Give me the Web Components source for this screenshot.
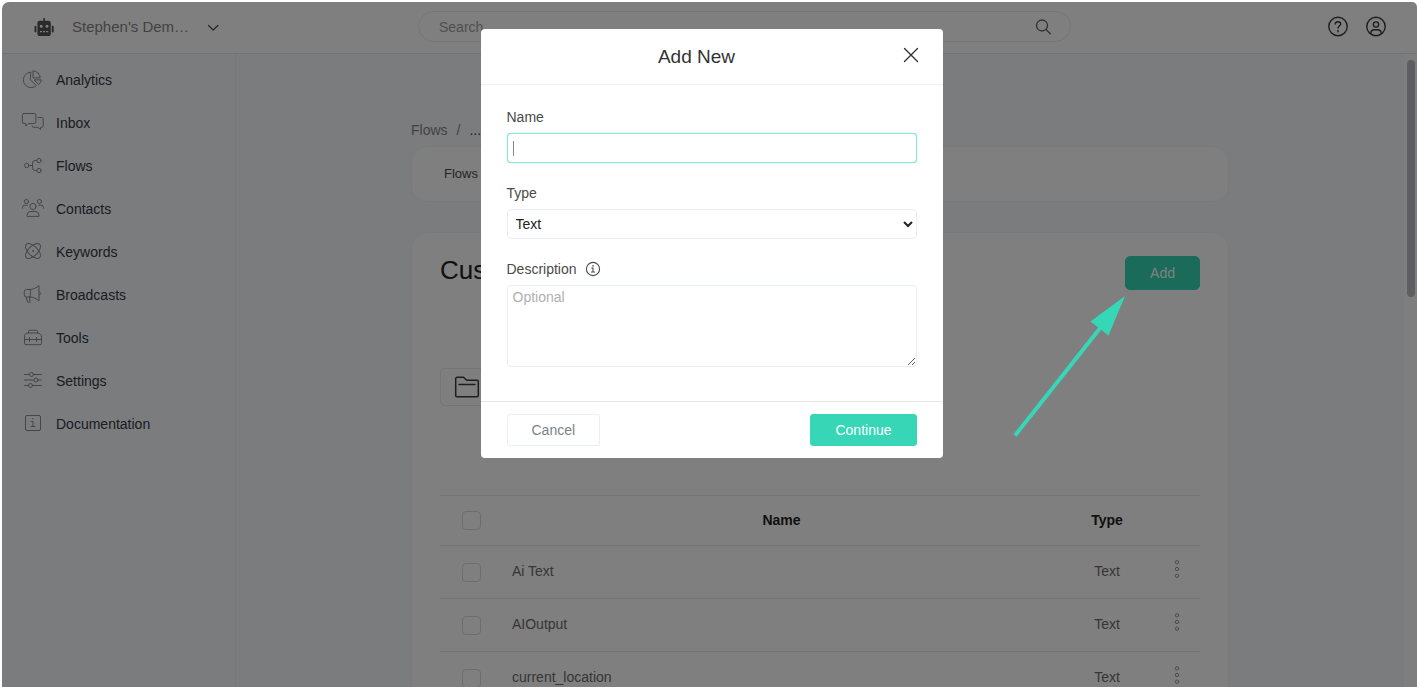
<!DOCTYPE html>
<html lang="en">
<head>
<meta charset="utf-8">
<title>Custom Fields</title>
<style>
  :root { --green: #37d6b6; --line: #e8eaee; --page: #f7f9fc; }
  html, body { margin: 0; height: 100%; background: #fff; overflow: hidden; }
  body { font: 14px/20px "Liberation Sans", Arial, sans-serif; color: #333a44; }
</style>
</head>
<body>
<app-shell>
  <app-header slot="header"></app-header>
  <app-sidebar slot="sidebar">
    <nav-item icon="pie" href="#analytics">Analytics</nav-item>
    <nav-item icon="chat" href="#inbox">Inbox</nav-item>
    <nav-item icon="flow" href="#flows">Flows</nav-item>
    <nav-item icon="people" href="#contacts">Contacts</nav-item>
    <nav-item icon="atom" href="#keywords">Keywords</nav-item>
    <nav-item icon="horn" href="#broadcasts">Broadcasts</nav-item>
    <nav-item icon="toolbox" href="#tools">Tools</nav-item>
    <nav-item icon="sliders" href="#settings">Settings</nav-item>
    <nav-item icon="doc" href="#documentation">Documentation</nav-item>
  </app-sidebar>
  <fields-page></fields-page>
  <modal-dialog slot="overlay" heading="Add New">
    <field-form></field-form>
    <ui-button slot="actions" variant="plain">Cancel</ui-button>
    <ui-button slot="actions" variant="primary">Continue</ui-button>
  </modal-dialog>
</app-shell>

<script>
const define = (name, html, setup) => {
  const template = document.createElement('template');
  template.innerHTML = html;
  customElements.define(name, class extends HTMLElement {
    constructor() {
      super();
      this.attachShadow({ mode: 'open' }).append(template.content.cloneNode(true));
    }
    connectedCallback() { if (setup) setup(this.shadowRoot, this); }
  });
};

/* Icons are drawn on a 24 x 24 grid. */
const ICONS = {
  pie: '<path d="M9.500 4.200a7.700 7.700 0 1 0 5.700 13.400L9.500 11.800z"/><path d="M12.400 2.800a7.300 7.300 0 0 1 6.800 7h-6.800z"/><path d="M13.400 11.900h7a6.500 6.500 0 0 1-2.400 4.300z"/>',
  chat: '<path d="M3 2.500h10.300a1.600 1.600 0 0 1 1.600 1.600v6.800a1.600 1.600 0 0 1-1.600 1.600H7.800l-3 2.500v-2.500H3a1.600 1.600 0 0 1-1.600-1.600V4.100A1.600 1.600 0 0 1 3 2.500z"/><path d="M17 6.500h3.700a1.500 1.500 0 0 1 1.500 1.500v6.800a1.500 1.500 0 0 1-1.500 1.500h-1.200v2.200l-2.800-2.200h-4.200a1.500 1.500 0 0 1-1.500-1.500"/>',
  flow: '<circle cx="5.700" cy="11.500" r="2.200"/><circle cx="18" cy="6.500" r="2.200"/><circle cx="18" cy="16.500" r="2.200"/><path d="M8 11.500h3.500M15.700 6.500h-1.500a2.700 2.700 0 0 0-2.700 2.700v4.600a2.700 2.700 0 0 0 2.700 2.700h1.500"/>',
  people: '<circle cx="12" cy="9.500" r="3.100"/><circle cx="5.500" cy="4.500" r="2.100"/><circle cx="18.500" cy="4.500" r="2.100"/><path d="M6 19v-.8a3.800 3.800 0 0 1 3.800-3.700h4.400a3.800 3.800 0 0 1 3.800 3.700v.8z"/><path d="M1.500 11.300v-.6a2.500 2.500 0 0 1 2.500-2.500h2.300M22.500 11.300v-.6a2.500 2.500 0 0 0-2.500-2.500h-2.300"/>',
  atom: '<ellipse cx="12" cy="11" rx="9.400" ry="4.700" transform="rotate(45 12 11)"/><ellipse cx="12" cy="11" rx="9.400" ry="4.700" transform="rotate(-45 12 11)"/><circle cx="12" cy="11" r=".5"/>',
  horn: '<path d="M9 6.500H5.500A2.200 2.200 0 0 0 3.300 8.700v3.100A2.200 2.200 0 0 0 5.500 14H9zM9 6.500c3 0 6.500-1.500 9-4v15.500c-2.500-2.600-6-4-9-4M18.500 9c1.800.2 1.800 2.600 0 2.800M5.200 14l1 4.200a1.300 1.300 0 0 0 1.300 1h1.600L8.300 14"/>',
  toolbox: '<path d="M7.500 7V5.700A1.500 1.500 0 0 1 9 4.200h6a1.500 1.500 0 0 1 1.500 1.500V7M6 7h12l2.500 2.700v7.500a1.500 1.500 0 0 1-1.500 1.500H5a1.500 1.500 0 0 1-1.500-1.500V9.700zM3.500 13.500h17M8.500 11.500v4M15.500 11.500v4"/>',
  sliders: '<circle cx="10.500" cy="5.500" r="2"/><circle cx="15" cy="11" r="2"/><circle cx="9.500" cy="16.500" r="2"/><path d="M3.500 5.500h5M12.500 5.500h8M3.500 11H13M17 11h3.500M3.500 16.500h4M11.500 16.500h9"/>',
  doc: '<rect x="4.500" y="3.500" width="15" height="15" rx="1.500"/><path d="M10.400 9.500H12v5M10 14.500h4M11.500 6.800h.8"/>',
  robot: '<g fill="currentColor" stroke="none"><path d="M11.300 3h1.600v3.500h-1.600z"/><path fill-rule="evenodd" d="M7.600 5.700h9a2.200 2.200 0 0 1 2.200 2.200v11a2.200 2.200 0 0 1-2.200 2.200h-9a2.200 2.200 0 0 1-2.200-2.200v-11a2.200 2.200 0 0 1 2.200-2.200zM9.200 9.800a1.500 1.500 0 1 0 0 3 1.500 1.500 0 0 0 0-3zm5.800 0a1.500 1.500 0 1 0 0 3 1.500 1.500 0 0 0 0-3zM8 16v1.300h2V16zm3.100 0v1.300h2V16zm3.100 0v1.300h2V16z"/><rect x="2.500" y="10.800" width="1.900" height="6.700" rx=".9"/><rect x="19.800" y="10.800" width="1.900" height="6.700" rx=".9"/></g>',
  chevron: '<path stroke-width="1.300" d="M7.500 10.500l4.700 4.500 4.700-4.500"/>',
  search: '<circle cx="11" cy="10.500" r="5.500" stroke-width="1.300"/><path stroke-width="1.300" d="M15 14.500l4.300 4.200"/>',
  help: '<g stroke-width="1.400"><circle cx="12" cy="11.500" r="9.200"/><path d="M9.300 9.100c.1-3.100 5.400-3 5.400 0 0 1.700-2.700 1.700-2.700 4M12 15.400v1.300"/></g>',
  user: '<g stroke-width="1.400"><circle cx="12" cy="11.500" r="9.200"/><circle cx="12" cy="9.500" r="2.600"/><path d="M6.800 18.700v-.4a3.700 3.700 0 0 1 3.700-3.600h3a3.700 3.700 0 0 1 3.700 3.600v.4"/></g>',
  folder: '<path stroke-width="1.500" d="M2 2.300h6.500l3.200 3H22a1.300 1.300 0 0 1 1.300 1.300v13.800a1.300 1.300 0 0 1-1.300 1.300H2a1.300 1.300 0 0 1-1.300-1.300V3.600A1.300 1.300 0 0 1 2 2.300zM4 9.500h16"/>',
  close: '<path stroke-width="1.400" d="M5.500 5.500l13 13M18.500 5.500l-13 13"/>',
  info: '<g stroke-width="1.200"><circle cx="12" cy="12" r="7.200"/><path d="M10.700 11H12v4.300M10.300 15.300h3.400M11.700 8.600h.8"/></g>',
  dots: '<circle cx="12" cy="5.300" r="1.700"/><circle cx="12" cy="12" r="1.700"/><circle cx="12" cy="18.700" r="1.700"/>'
};

define('ui-icon', `
  <style>
    :host { display: inline-flex; flex: none; width: 24px; height: 24px; }
    svg { width: 100%; height: 100%; overflow: visible; fill: none; stroke: currentColor; stroke-linecap: round; stroke-linejoin: round; }
  </style>
  <svg viewBox="0 0 24 24" aria-hidden="true"></svg>`,
  (root, host) => { root.querySelector('svg').innerHTML = ICONS[host.getAttribute('name')]; });

define('ui-button', `
  <style>
    :host { display: inline-flex; }
    button { font: inherit; height: 32px; padding: 0 24px; border: 1px solid var(--line); border-radius: 3px; background: #fff; color: #7c8188; cursor: pointer; }
    :host([variant=primary]) button { color: #fff; border-color: var(--green); background: var(--green); }
    :host([variant=plain]) button { border-color: #eaeef5; }
    :host([size=large]) button { height: 34px; border-radius: 5px; }
  </style>
  <button type="button"><slot></slot></button>`);

define('app-shell', `
  <style>
    :host { display: block; height: 100%; box-sizing: border-box; padding: 2px 2px 0; background: #fff; }
    .frame { position: relative; height: 100%; display: grid; grid-template: auto minmax(0, 1fr) / 234px minmax(0, 1fr); border-radius: 7px 5px 0 0; overflow: hidden; background: var(--page); }
    .top { grid-column: 1 / -1; }
    main { display: flex; min-height: 0; overflow: hidden; }
    .content { flex: 1; min-width: 0; }
    .track { flex: none; width: 8px; padding: 6px 2px 0 3px; background: #fcfcfc; }
    .thumb { height: 237px; border-radius: 4px; background: #bcbdc0; }
  </style>
  <div class="frame">
    <div class="top"><slot name="header"></slot></div>
    <slot name="sidebar"></slot>
    <main>
      <div class="content"><slot></slot></div>
      <div class="track" aria-hidden="true"><div class="thumb"></div></div>
    </main>
    <slot name="overlay"></slot>
  </div>`);

define('app-header', `
  <style>
    :host { display: grid; grid-template-columns: 416px minmax(0, 653px) minmax(0, 1fr); align-items: center; height: 49px; padding-bottom: 2px; border-bottom: 1px solid #e4e7ed; background: #fff; }
    .brand { display: flex; align-items: center; padding-left: 30px; font-size: 15px; color: #858585; }
    .brand ui-icon { color: #555; }
    .brand button { all: unset; display: flex; align-items: center; gap: 12px; margin-left: 16px; cursor: pointer; }
    .search { display: flex; align-items: center; height: 31px; padding: 0 15px 0 20px; border: 1px solid #ececec; border-radius: 16px; box-sizing: border-box; }
    input { flex: 1; min-width: 0; padding: 0; border: 0; outline: 0; background: none; font: inherit; }
    input::placeholder { color: #a0a0a0; }
    .search ui-icon { color: #666; }
    .actions { display: flex; justify-content: flex-end; gap: 14px; padding-right: 29px; }
    .actions button { all: unset; display: flex; cursor: pointer; color: #3a3a3a; }
  </style>
  <div class="brand">
    <ui-icon name="robot"></ui-icon>
    <button type="button">Stephen's Dem… <ui-icon name="chevron"></ui-icon></button>
  </div>
  <div class="search">
    <input type="text" placeholder="Search" aria-label="Search">
    <ui-icon name="search"></ui-icon>
  </div>
  <div class="actions">
    <button type="button" aria-label="Help"><ui-icon name="help"></ui-icon></button>
    <button type="button" aria-label="Account"><ui-icon name="user"></ui-icon></button>
  </div>`);

define('app-sidebar', `
  <style>
    :host { display: block; border-right: 1px solid #eceef2; }
    nav { display: flex; flex-direction: column; padding-top: 4px; }
  </style>
  <nav><slot></slot></nav>`);

define('nav-item', `
  <style>
    :host { display: block; }
    a { display: flex; align-items: center; gap: 11px; height: 43px; padding-left: 19px; color: #333a44; text-decoration: none; }
    ui-icon { color: #8b8d91; }
  </style>
  <a><ui-icon></ui-icon><slot></slot></a>`,
  (root, host) => {
    root.querySelector('a').href = host.getAttribute('href');
    const icon = document.createElement('ui-icon');
    icon.setAttribute('name', host.getAttribute('icon'));
    root.querySelector('ui-icon').replaceWith(icon);
  });

define('content-card', `
  <style>
    :host { display: block; box-sizing: border-box; border: 1px solid #f2f2f2; border-radius: 16px; background: #fff; }
  </style>
  <slot></slot>`);

define('pointer-arrow', `
  <style>
    :host { display: block; }
    svg { display: block; width: 112px; height: 141px; fill: var(--green); stroke: var(--green); }
  </style>
  <svg viewBox="0 0 112 141" aria-hidden="true">
    <path d="M2 139.500L88 31" stroke-width="4" fill="none"/>
    <path d="M112 0L77.500 25.500 95.500 39.500z" stroke="none"/>
  </svg>`);

define('fields-page', `
  <style>
    :host { display: block; max-width: 818px; margin: 0 auto; padding-top: 66px; }
    .crumbs { display: flex; gap: 9px; height: 20px; margin-bottom: 6px; color: #858585; }
    .crumbs a { color: inherit; text-decoration: none; }
    .crumbs a:last-child { color: #444; }
    .tabs { display: flex; align-items: center; height: 56px; padding: 0 32px; margin-bottom: 30px; font-size: 13px; }
    .tabs a { color: #4a4a4a; text-decoration: none; }
    .panel { padding: 23px 28px; }
    .head { display: flex; justify-content: space-between; align-items: flex-start; margin-bottom: 78px; }
    h1 { margin: 0; font-size: 26px; line-height: 28px; font-weight: 400; color: #222; }
    .add { position: relative; }
    pointer-arrow { position: absolute; right: 100%; top: 40px; z-index: 30; }
    .folder { display: flex; align-items: center; height: 38px; padding: 0 14px; border: 1px solid var(--line); border-radius: 5px; background: #fff; color: #3c3c3c; margin-bottom: 89px; }
  </style>
  <nav class="crumbs" aria-label="Breadcrumb"><a href="#flows">Flows</a><span>/</span><a href="#more">...</a></nav>
  <content-card class="tabs"><a href="#flows">Flows</a></content-card>
  <content-card class="panel">
    <div class="head">
      <h1>Cus</h1>
      <div class="add">
        <ui-button variant="primary" size="large">Add</ui-button>
        <pointer-arrow></pointer-arrow>
      </div>
    </div>
    <button class="folder" type="button" aria-label="New folder"><ui-icon name="folder"></ui-icon></button>
    <fields-table></fields-table>
  </content-card>`);

define('fields-table', `
  <style>
    :host { display: block; }
    table { width: 100%; border-collapse: collapse; table-layout: fixed; }
    th, td { box-sizing: border-box; height: 53px; padding: 0 0 2px; border-top: 1px solid var(--line); text-align: center; color: #6c6c6c; }
    th { height: 50px; color: #222; }
    .tick { width: 62px; padding: 0; }
    .type { width: 92px; }
    .more { width: 47px; padding-bottom: 6px; }
    td.name { padding-left: 10px; text-align: left; }
    input { appearance: none; display: block; width: 19px; height: 19px; margin: 0 auto; border: 1px solid #d9dadd; border-radius: 4px; background: #fff; }
    button { all: unset; display: flex; margin: 0 auto; width: 24px; color: #999; cursor: pointer; }
  </style>
  <table>
    <thead><tr><th class="tick"><input type="checkbox" aria-label="Select all"></th><th>Name</th><th class="type">Type</th><th class="more"></th></tr></thead>
    <tbody></tbody>
  </table>`,
  root => {
    root.querySelector('tbody').innerHTML = ['Ai Text', 'AIOutput', 'current_location'].map(name => `
      <tr><td class="tick"><input type="checkbox" aria-label="Select ${name}"></td><td class="name">${name}</td><td>Text</td>
      <td class="more"><button type="button" aria-label="Options for ${name}"><ui-icon name="dots"></ui-icon></button></td></tr>`).join('');
  });

define('modal-dialog', `
  <style>
    :host { position: absolute; inset: 0; z-index: 20; display: flex; justify-content: center; align-items: flex-start; padding: 27px 0 0 4px; background: rgba(0, 0, 0, .5); }
    dialog { position: static; box-sizing: border-box; width: 462px; max-width: 100%; margin: 0; padding: 0; border: 0; border-radius: 4px; background: #fff; color: inherit; }
    header { display: flex; align-items: center; height: 55px; padding: 0 20px 0 28px; border-bottom: 1px solid #eeeff1; }
    h2 { flex: 1; margin: 0; padding-right: 14px; font-size: 19px; line-height: 24px; font-weight: 400; color: #333; text-align: center; }
    header button { all: unset; display: flex; margin-bottom: 4px; color: #333; cursor: pointer; }
    .body { padding: 24px 26px 34px; }
    footer { display: flex; justify-content: space-between; padding: 12px 26px; border-top: 1px solid #e6e8ea; }
  </style>
  <dialog open aria-labelledby="title">
    <header><h2 id="title"></h2><button type="button" aria-label="Close"><ui-icon name="close"></ui-icon></button></header>
    <div class="body"><slot></slot></div>
    <footer><slot name="actions"></slot></footer>
  </dialog>`,
  (root, host) => { root.querySelector('h2').textContent = host.getAttribute('heading'); });

define('field-form', `
  <style>
    :host { display: block; }
    form { display: grid; margin: 0; }
    label { display: flex; align-items: center; gap: 5px; height: 16px; margin-bottom: 8px; color: #4a4a4a; }
    label ui-icon { width: 22px; height: 22px; }
    input, select, textarea { box-sizing: border-box; width: 100%; margin: 0 0 22px; border: 1px solid #e9edf4; border-radius: 4px; background: #fff; font: inherit; color: #333; outline: 0; }
    input, select { height: 30px; }
    input { padding: 0 5px; border-color: #8ee8d6; box-shadow: 0 0 1px var(--green); caret-color: transparent; background: linear-gradient(#888, #888) 5px 50% / 1px 15px no-repeat #fff; }
    select { padding: 0 4px; color: #222; }
    textarea { height: 82px; margin: 0; padding: 1px 5px; resize: vertical; }
    textarea::placeholder { color: #b0b0b0; }
  </style>
  <form>
    <label for="name">Name</label>
    <input id="name" type="text">
    <label for="type">Type</label>
    <select id="type"><option>Text</option></select>
    <label for="description">Description <ui-icon name="info"></ui-icon></label>
    <textarea id="description" placeholder="Optional"></textarea>
  </form>`);
</script>
</body>
</html>
